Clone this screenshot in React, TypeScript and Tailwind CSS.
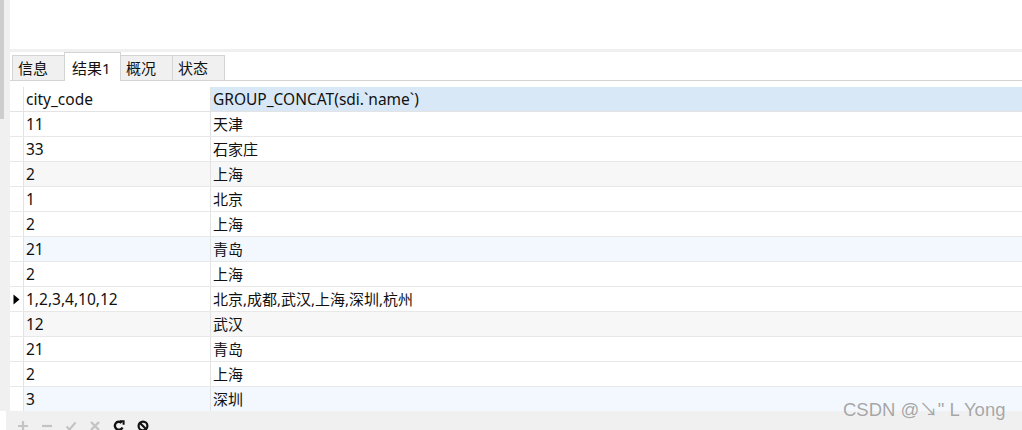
import React from "react";

const rows: { code: string; names: string; bg: string; current?: boolean }[] = [
  { code: "11", names: "天津", bg: "bg-white" },
  { code: "33", names: "石家庄", bg: "bg-white" },
  { code: "2", names: "上海", bg: "bg-[#f7f7f7]" },
  { code: "1", names: "北京", bg: "bg-white" },
  { code: "2", names: "上海", bg: "bg-white" },
  { code: "21", names: "青岛", bg: "bg-[#f2f8fe]" },
  { code: "2", names: "上海", bg: "bg-white" },
  { code: "1,2,3,4,10,12", names: "北京,成都,武汉,上海,深圳,杭州", bg: "bg-white", current: true },
  { code: "12", names: "武汉", bg: "bg-[#f7f7f7]" },
  { code: "21", names: "青岛", bg: "bg-white" },
  { code: "2", names: "上海", bg: "bg-white" },
  { code: "3", names: "深圳", bg: "bg-[#f2f8fe]" },
];

const tabs = ["信息", "结果1", "概况", "状态"];

const font = { fontFamily: '"Noto Sans", "Noto Sans CJK SC", sans-serif' };

function ToolIcon({ kind }: { kind: string }) {
  const gray = "#c4c4c4";
  return (
    <svg width="12" height="12" viewBox="0 0 12 12" className="block">
      {kind === "plus" && (
        <path d="M6 1v10M1 6h10" stroke={gray} strokeWidth="2.2" fill="none" />
      )}
      {kind === "minus" && <path d="M1 6h10" stroke={gray} strokeWidth="2.2" fill="none" />}
      {kind === "check" && (
        <path d="M1.5 6.5l3 3 6-7" stroke={gray} strokeWidth="2.2" fill="none" />
      )}
      {kind === "cross" && (
        <path d="M2 2l8 8M10 2l-8 8" stroke={gray} strokeWidth="2.4" fill="none" />
      )}
      {kind === "refresh" && (
        <g fill="none" stroke="#111" strokeWidth="2.4">
          <path d="M9.5 7.5A4 4 0 1 1 8.6 2.8" />
          <path d="M7 1.2h3.6v3.6" strokeWidth="2" />
        </g>
      )}
      {kind === "stop" && (
        <g fill="none" stroke="#111" strokeWidth="2.2">
          <circle cx="6" cy="6" r="4.4" />
          <path d="M3 3l6 6" />
        </g>
      )}
    </svg>
  );
}

export default function App() {
  return (
    <div className="relative flex h-[430px] w-[1022px] flex-col overflow-hidden bg-white text-[#111]" style={font}>
      <div className="flex h-[411px] shrink-0 overflow-hidden">
        {/* left edge */}
        <div className="flex w-[10px] shrink-0 flex-col">
          <div className="flex h-[119px] shrink-0">
            <div className="w-[4px] bg-[#cdcdcd]" />
            <div className="flex-1 bg-[#f0f0f0]" />
          </div>
          <div className="flex-1 bg-[#f0f0f0]" />
        </div>

        <div className="flex min-w-0 flex-1 flex-col">
          <div className="h-[49px] shrink-0 bg-white" />
          <div className="h-[3px] shrink-0 bg-[#f0f0f0]" />

          {/* tabs */}
          <div className="flex h-[29px] shrink-0 items-end border-b border-[#d4d4d4] pl-[2px]">
            {tabs.map((t, i) =>
              i === 1 ? (
                <div
                  key={t}
                  className="-mb-px flex h-[29px] w-[57px] items-center border border-b-0 border-[#d4d4d4] bg-white pl-[7px] pt-[2px] text-[15px]"
                >
                  {t}
                </div>
              ) : (
                <div
                  key={t}
                  className={`flex h-[25px] w-[52px] items-center border border-b-0 border-[#d4d4d4] bg-[#f0f0f0] pl-[5px] text-[15px] ${i > 1 ? "border-l-0" : ""} ${i === 0 ? "border-r-0" : ""}`}
                >
                  {t}
                </div>
              )
            )}
          </div>

          <div className="h-[6px] shrink-0 bg-white" />

          {/* header */}
          <div className="flex h-[25px] shrink-0 border-b border-[#e3e3e3] text-[15.5px]">
            <div className="w-[14px] border-r border-[#e3e3e3] bg-white" />
            <div className="flex w-[187px] items-center border-r border-[#e3e3e3] pl-[2px] pt-px">city_code</div>
            <div className="flex flex-1 items-center bg-[#d9e8f7] pl-[2px] pt-px">GROUP_CONCAT(sdi.`name`)</div>
          </div>

          {/* rows */}
          {rows.map((r, i) => (
            <div key={i} className={`flex h-[25px] shrink-0 border-b border-[#e8e8e8] text-[15.5px] ${r.bg}`}>
              <div className="flex w-[14px] items-center justify-center border-r border-[#e3e3e3] bg-white">
                {r.current && (
                  <svg width="7" height="11" viewBox="0 0 7 11">
                    <path d="M0.5 0.5L6.5 5.5L0.5 10.5Z" fill="#000" />
                  </svg>
                )}
              </div>
              <div className="flex w-[187px] items-center border-r border-[#e3e3e3] pl-[2px] pt-px">{r.code}</div>
              <div className="flex flex-1 items-center pl-[2px] text-[15px]">{r.names}</div>
            </div>
          ))}
        </div>
      </div>

      {/* bottom toolbar */}
      <div className="flex h-[19px] shrink-0">
        <div className="w-[6px] bg-white" />
        <div className="flex flex-1 items-end gap-[12px] bg-[#f0f0f0] pl-[11px]">
          <div className="translate-y-[2px]"><ToolIcon kind="plus" /></div>
          <div className="translate-y-[2px]"><ToolIcon kind="minus" /></div>
          <div className="translate-y-[2px]"><ToolIcon kind="check" /></div>
          <div className="translate-y-[2px]"><ToolIcon kind="cross" /></div>
          <div className="translate-y-[2px]"><ToolIcon kind="refresh" /></div>
          <div className="translate-y-[2px]"><ToolIcon kind="stop" /></div>
        </div>
      </div>

      {/* watermark */}
      <div
        className="absolute left-[843px] top-[401px] text-[18.5px] leading-none text-[#a6a6a6]"
        style={{ fontFamily: '"Liberation Sans", "Noto Sans CJK SC", sans-serif', textShadow: "0 0 1px #fff" }}
      >
        CSDN @↘" L Yong
      </div>
    </div>
  );
}
